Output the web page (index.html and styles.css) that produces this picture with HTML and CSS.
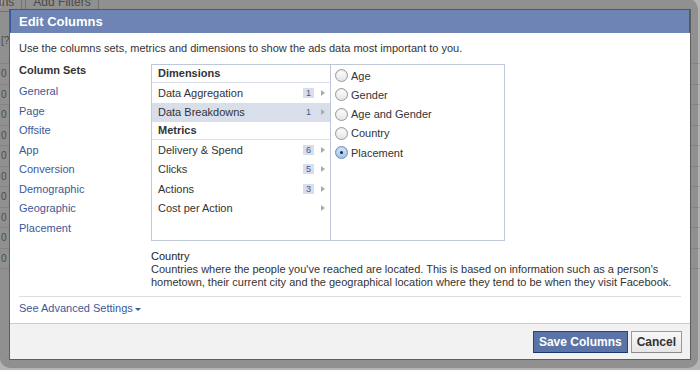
FILE: index.html
```html
<!DOCTYPE html>
<html lang="en">
<head>
  <meta charset="UTF-8">
  <title>Edit Columns</title>
  <link rel="stylesheet" href="styles.css">
</head>
<body>

<!-- page behind the dialog -->
<div class="page">
  <div class="tabs">
    <span class="tab">Columns</span>
    <span class="tab">Add Filters</span>
  </div>
  <div class="rows">
    <div class="row row-head">[?]</div>
    <div class="row">0</div>
    <div class="row">0</div>
    <div class="row">0</div>
    <div class="row">0</div>
    <div class="row">0</div>
    <div class="row">0</div>
    <div class="row">0</div>
    <div class="row">0</div>
    <div class="row">0</div>
    <div class="row">0</div>
  </div>
</div>

<!-- dialog -->
<div class="frame">
  <div class="dialog">
    <div class="dialog-title">Edit Columns</div>

    <div class="dialog-body">
      <p class="intro">Use the columns sets, metrics and dimensions to show the ads data most important to you.</p>

      <div class="picker">
        <div class="sets">
          <h4>Column Sets</h4>
          <a href="#">General</a>
          <a href="#">Page</a>
          <a href="#">Offsite</a>
          <a href="#">App</a>
          <a href="#">Conversion</a>
          <a href="#">Demographic</a>
          <a href="#">Geographic</a>
          <a href="#">Placement</a>
        </div>

        <div class="main">
          <div class="box">
            <ul class="cats">
              <li class="cat-head">Dimensions</li>
              <li class="cat"><span class="label">Data Aggregation</span><span class="count">1</span><i class="arrow"></i></li>
              <li class="cat selected"><span class="label">Data Breakdowns</span><span class="count">1</span><i class="arrow"></i></li>
              <li class="cat-head">Metrics</li>
              <li class="cat"><span class="label">Delivery &amp; Spend</span><span class="count">6</span><i class="arrow"></i></li>
              <li class="cat"><span class="label">Clicks</span><span class="count">5</span><i class="arrow"></i></li>
              <li class="cat"><span class="label">Actions</span><span class="count">3</span><i class="arrow"></i></li>
              <li class="cat"><span class="label">Cost per Action</span><i class="arrow"></i></li>
            </ul>

            <ul class="options">
              <li><span class="radio"></span>Age</li>
              <li><span class="radio"></span>Gender</li>
              <li><span class="radio"></span>Age and Gender</li>
              <li><span class="radio"></span>Country</li>
              <li><span class="radio checked"></span>Placement</li>
            </ul>
          </div>

          <div class="desc">
            <div class="desc-title">Country</div>
            <p>Countries where the people you've reached are located. This is based on information such as a person's hometown, their current city and the geographical location where they tend to be when they visit Facebook.</p>
          </div>
        </div>
      </div>

      <div class="advanced">
        <a href="#">See Advanced Settings<i class="caret"></i></a>
      </div>
    </div>

    <div class="dialog-footer">
      <button class="btn btn-primary">Save Columns</button>
      <button class="btn">Cancel</button>
    </div>
  </div>
</div>

</body>
</html>
```

FILE: styles.css
```css
body {
  margin: 0;
  width: 700px;
  height: 370px;
  overflow: hidden;
  position: relative;
  background: #b4b4b4;
  font-family: "Liberation Sans", Arial, sans-serif;
  font-size: 11px;
  color: #333;
}

/* page behind the overlay */
.page {
  position: absolute;
  top: 0;
  left: 0;
  right: 0;
  bottom: 0;
  color: #555;
}

.tabs {
  display: flex;
  margin-top: -8px;
  margin-left: -41px;
}

.tab {
  padding: 2px 7px;
  border: 1px solid #888;
  margin-right: 3px;
  font-size: 12px;
}

.rows {
  margin-top: 17px;
}

.row {
  height: 19.5px;
  line-height: 19.5px;
  border-bottom: 1px solid #a2a2a2;
  padding-left: 1px;
  font-size: 10px;
}

.row-head {
  height: 34px;
  line-height: 24px;
}

/* overlay frame */
.frame {
  position: absolute;
  top: -1px;
  left: 0;
  width: 698px;
  box-sizing: border-box;
  padding: 10px 7px 8px 9px;
  border-radius: 10px;
  background: rgba(50, 50, 50, 0.28);
}

.dialog {
  background: #fff;
  border: 1px solid #5e5e5e;
  border-top: 0;
}

.dialog-title {
  height: 22px;
  line-height: 23px;
  padding: 0 8px;
  background: #6d84b4;
  border: 1px solid #3b5998;
  border-bottom-color: #6d84b4;
  color: #fff;
  font-size: 13px;
  font-weight: bold;
}

.dialog-body {
  padding: 8px 9px 0;
}

.intro {
  margin: 0;
  line-height: 14px;
}

.picker {
  display: flex;
  margin-top: 9px;
}

.sets {
  width: 132px;
}

.sets h4 {
  margin: -1px 0 5px;
  font-size: 11px;
  line-height: 14px;
}

.sets a {
  display: block;
  line-height: 19.5px;
  color: #3b5998;
  text-decoration: none;
}

.main {
  flex: 1;
}

.box {
  display: flex;
  width: 354px;
  height: 177px;
  box-sizing: border-box;
  border: 1px solid #bdc7d8;
}

.cats,
.options {
  list-style: none;
  margin: 0;
  padding: 0;
}

.cats {
  width: 178px;
  border-right: 1px solid #bdc7d8;
}

.cat-head {
  height: 17px;
  line-height: 17px;
  padding-left: 6px;
  font-weight: bold;
  border-bottom: 1px solid #d8dfea;
}

.cat {
  display: flex;
  align-items: center;
  height: 19.5px;
  padding: 0 5px 0 6px;
}

.cat.selected {
  background: #d8dfea;
}

.cat .label {
  flex: 1;
}

.count {
  padding: 0 3px;
  line-height: 10px;
  font-size: 9px;
  background: #d8dfea;
  color: #3b5998;
}

.arrow {
  width: 0;
  height: 0;
  margin-left: 7px;
  border-left: 4px solid #aaa;
  border-top: 3px solid transparent;
  border-bottom: 3px solid transparent;
}

.options {
  flex: 1;
  padding: 1px 0 0 4px;
}

.options li {
  display: flex;
  align-items: center;
  height: 19.25px;
}

.radio {
  width: 11px;
  height: 11px;
  margin-right: 3px;
  border: 1px solid #999;
  border-radius: 50%;
  background: linear-gradient(#fff, #e4e4e4);
  box-shadow: inset 0 1px 1px rgba(0, 0, 0, 0.1);
  position: relative;
}

.radio.checked {
  border-color: #6b89b5;
  background: linear-gradient(#d6e8fa, #9cc3ec);
}

.radio.checked::after {
  content: "";
  position: absolute;
  top: 4px;
  left: 4px;
  width: 3px;
  height: 3px;
  border-radius: 50%;
  background: #1d2a3a;
}

.desc {
  margin-top: 9px;
  line-height: 13px;
}

.desc-title {
  color: #222;
}

.desc p {
  margin: 0;
}

.advanced {
  margin-top: 7px;
  padding: 4px 0 8px;
  border-top: 1px solid #ddd;
  line-height: 14px;
}

.advanced a {
  color: #3b5998;
  text-decoration: none;
}

.caret {
  display: inline-block;
  margin-left: 2px;
  vertical-align: middle;
  border-top: 3px solid #3b5998;
  border-left: 3px solid transparent;
  border-right: 3px solid transparent;
}

.dialog-footer {
  display: flex;
  justify-content: flex-end;
  gap: 3px;
  padding: 7px 8px 6px;
  background: #f2f2f2;
  border-top: 1px solid #ccc;
}

.btn {
  height: 22px;
  padding: 0 5px;
  font-family: inherit;
  font-size: 12px;
  font-weight: bold;
  color: #333;
  background: linear-gradient(#f8f8f8, #e6e6e6);
  border: 1px solid #999;
  border-bottom-color: #888;
}

.btn-primary {
  color: #fff;
  background: #5b74a8;
  border-color: #29447e #29447e #1a356e;
}
```
